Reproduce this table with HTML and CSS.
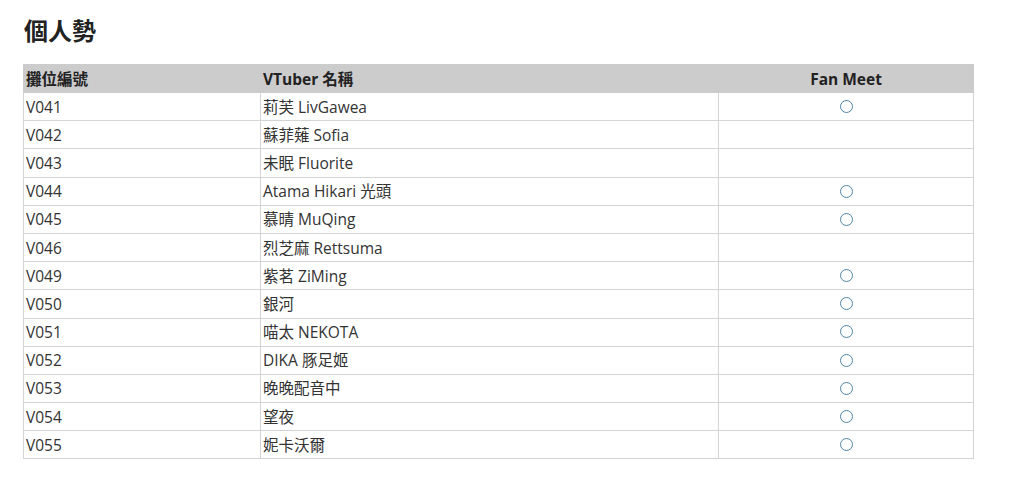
FILE: index.html
```html
<!DOCTYPE html>
<html lang="zh-Hant">
<head>
<meta charset="utf-8">
<link rel="stylesheet" href="styles.css">
</head>
<body>
<div class="page">
  <h2 class="title">個人勢</h2>
  <table class="booths">
    <thead>
      <tr><th class="c1">攤位編號</th><th class="c2">VTuber 名稱</th><th class="c3">Fan Meet</th></tr>
    </thead>
    <tbody>
      <tr><td>V041</td><td>莉芙 LivGawea</td><td class="mark"><span class="ring"></span></td></tr>
      <tr><td>V042</td><td>蘇菲薙 Sofia</td><td class="mark"></td></tr>
      <tr><td>V043</td><td>未眠 Fluorite</td><td class="mark"></td></tr>
      <tr><td>V044</td><td>Atama Hikari 光頭</td><td class="mark"><span class="ring"></span></td></tr>
      <tr><td>V045</td><td>慕晴 MuQing</td><td class="mark"><span class="ring"></span></td></tr>
      <tr><td>V046</td><td>烈芝麻 Rettsuma</td><td class="mark"></td></tr>
      <tr><td>V049</td><td>紫茗 ZiMing</td><td class="mark"><span class="ring"></span></td></tr>
      <tr><td>V050</td><td>銀河</td><td class="mark"><span class="ring"></span></td></tr>
      <tr><td>V051</td><td>喵太 NEKOTA</td><td class="mark"><span class="ring"></span></td></tr>
      <tr><td>V052</td><td>DIKA 豚足姬</td><td class="mark"><span class="ring"></span></td></tr>
      <tr><td>V053</td><td>晚晚配音中</td><td class="mark"><span class="ring"></span></td></tr>
      <tr><td>V054</td><td>望夜</td><td class="mark"><span class="ring"></span></td></tr>
      <tr><td>V055</td><td>妮卡沃爾</td><td class="mark"><span class="ring"></span></td></tr>
    </tbody>
  </table>
</div>
</body>
</html>
```
FILE: styles.css
```css
html, body {
  margin: 0;
  padding: 0;
  background: #fff;
}
body {
  font-family: "Open Sans", "Noto Sans CJK TC", sans-serif;
  color: #333;
}
.page {
  padding: 16px 23px;
}
.title {
  margin: 0 0 18px 1px;
  font-size: 24px;
  line-height: 30px;
  font-weight: 700;
  color: #222;
}
.booths {
  width: 951px;
  border-collapse: collapse;
  font-size: 15.5px;
}
.booths th {
  background: #cccccc;
  height: 27px;
  padding: 0 2px;
  text-align: left;
  font-weight: 700;
  color: #222;
  border: 1px solid #cccccc;
  line-height: 20px;
}
.booths th.c3 { text-align: center; }
.booths th.c1 { width: 232px; }
.booths th.c2 { width: 453px; }
.booths td {
  height: 27.2px;
  padding: 0 2px;
  border: 1px solid #d4d4d4;
  color: #333;
  line-height: 20px;
}
.booths td.mark {
  text-align: center;
}
.ring {
  display: inline-block;
  width: 11px;
  height: 11px;
  border: 1px solid #4f86a6;
  border-radius: 50%;
  vertical-align: middle;
  position: relative;
  top: -2px;
}
```
